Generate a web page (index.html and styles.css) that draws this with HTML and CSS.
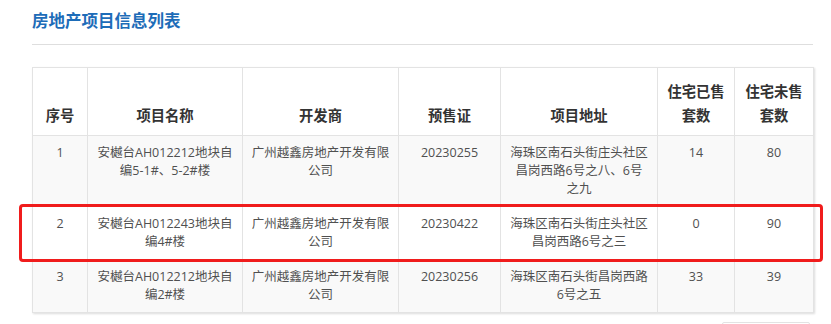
FILE: index.html
```html
<!DOCTYPE html>
<html lang="zh-CN">
<head>
<meta charset="utf-8">
<title>房地产项目信息列表</title>
<link rel="stylesheet" href="styles.css">
</head>
<body>
<div class="page">
  <div class="heading">
    <h2 class="title">房地产项目信息列表</h2>
  </div>
  <div class="table-wrap">
    <table class="info-table">
      <colgroup>
        <col class="c-no"><col class="c-name"><col class="c-dev"><col class="c-permit"><col class="c-addr"><col class="c-sold"><col class="c-unsold">
      </colgroup>
      <thead>
        <tr>
          <th>序号</th>
          <th>项目名称</th>
          <th>开发商</th>
          <th>预售证</th>
          <th>项目地址</th>
          <th>住宅已售<br>套数</th>
          <th>住宅未售<br>套数</th>
        </tr>
      </thead>
      <tbody>
        <tr>
          <td>1</td>
          <td>安樾台AH012212地块自编5-1#、5-2#楼</td>
          <td>广州越鑫房地产开发有限公司</td>
          <td>20230255</td>
          <td class="addr">海珠区南石头街庄头社区昌岗西路6号之八、6号之九</td>
          <td>14</td>
          <td>80</td>
        </tr>
        <tr class="plain">
          <td>2</td>
          <td>安樾台AH012243地块自编4#楼</td>
          <td>广州越鑫房地产开发有限公司</td>
          <td>20230422</td>
          <td class="addr">海珠区南石头街庄头社区昌岗西路6号之三</td>
          <td>0</td>
          <td>90</td>
        </tr>
        <tr>
          <td>3</td>
          <td>安樾台AH012212地块自编2#楼</td>
          <td>广州越鑫房地产开发有限公司</td>
          <td>20230256</td>
          <td class="addr">海珠区南石头街昌岗西路6号之五</td>
          <td>33</td>
          <td>39</td>
        </tr>
      </tbody>
    </table>
    <div class="highlight"></div>
  </div>
  <div class="pager-row">
    <div class="pager"></div>
  </div>
</div>
</body>
</html>
```

FILE: styles.css
```css
* { box-sizing: border-box; }

html, body {
  margin: 0;
  padding: 0;
  background: #ffffff;
}

body {
  font-family: "Open Sans", "Noto Sans CJK SC", sans-serif;
  color: #555;
}

.page {
  width: 831px;
  padding: 0 18px 0 32px;
}

.heading {
  padding-top: 10px;
  border-bottom: 1px solid #dedede;
  padding-bottom: 14px;
}

.title {
  margin: 0;
  font-family: "Noto Sans CJK SC", sans-serif;
  font-size: 16.5px;
  line-height: 20px;
  font-weight: 700;
  color: #1d6cb8;
}

.table-wrap {
  position: relative;
  margin-top: 22px;
  width: 781px;
}

.info-table {
  width: 781px;
  table-layout: fixed;
  border-collapse: collapse;
  border: 1px solid #e0e0e0;
  box-shadow: 1px 1px 2px rgba(0, 0, 0, 0.14);
  background: #fff;
}

.c-no { width: 55px; }
.c-name { width: 155px; }
.c-dev { width: 156px; }
.c-permit { width: 102px; }
.c-addr { width: 157px; }
.c-sold { width: 77px; }
.c-unsold { width: 79px; }

.info-table th,
.info-table td {
  border: 1px solid #e3e3e3;
  text-align: center;
}

.info-table th {
  font-family: "Noto Sans CJK SC", sans-serif;
  font-size: 14.3px;
  font-weight: 700;
  color: #333;
  line-height: 24px;
  padding: 11px 4px 8px;
  vertical-align: bottom;
  background: #fff;
}

.info-table td {
  font-size: 12.5px;
  line-height: 18px;
  padding: 8px 6px 8px;
  vertical-align: top;
  color: #505050;
}

.info-table td.addr {
  padding-left: 9px;
  padding-right: 9px;
}

.info-table tbody tr {
  background: #f9f9f9;
}

.info-table tbody tr.plain {
  background: #fff;
}

.highlight {
  position: absolute;
  left: -13px;
  top: 137px;
  width: 804px;
  height: 58px;
  border: 3px solid #f01c1c;
  border-radius: 4px;
  pointer-events: none;
}

.pager-row {
  display: flex;
  justify-content: flex-end;
  padding-right: 3px;
  margin-top: 9px;
}

.pager {
  width: 88px;
  height: 22px;
  border: 1px solid #e3e3e3;
  border-radius: 2px;
}
```
